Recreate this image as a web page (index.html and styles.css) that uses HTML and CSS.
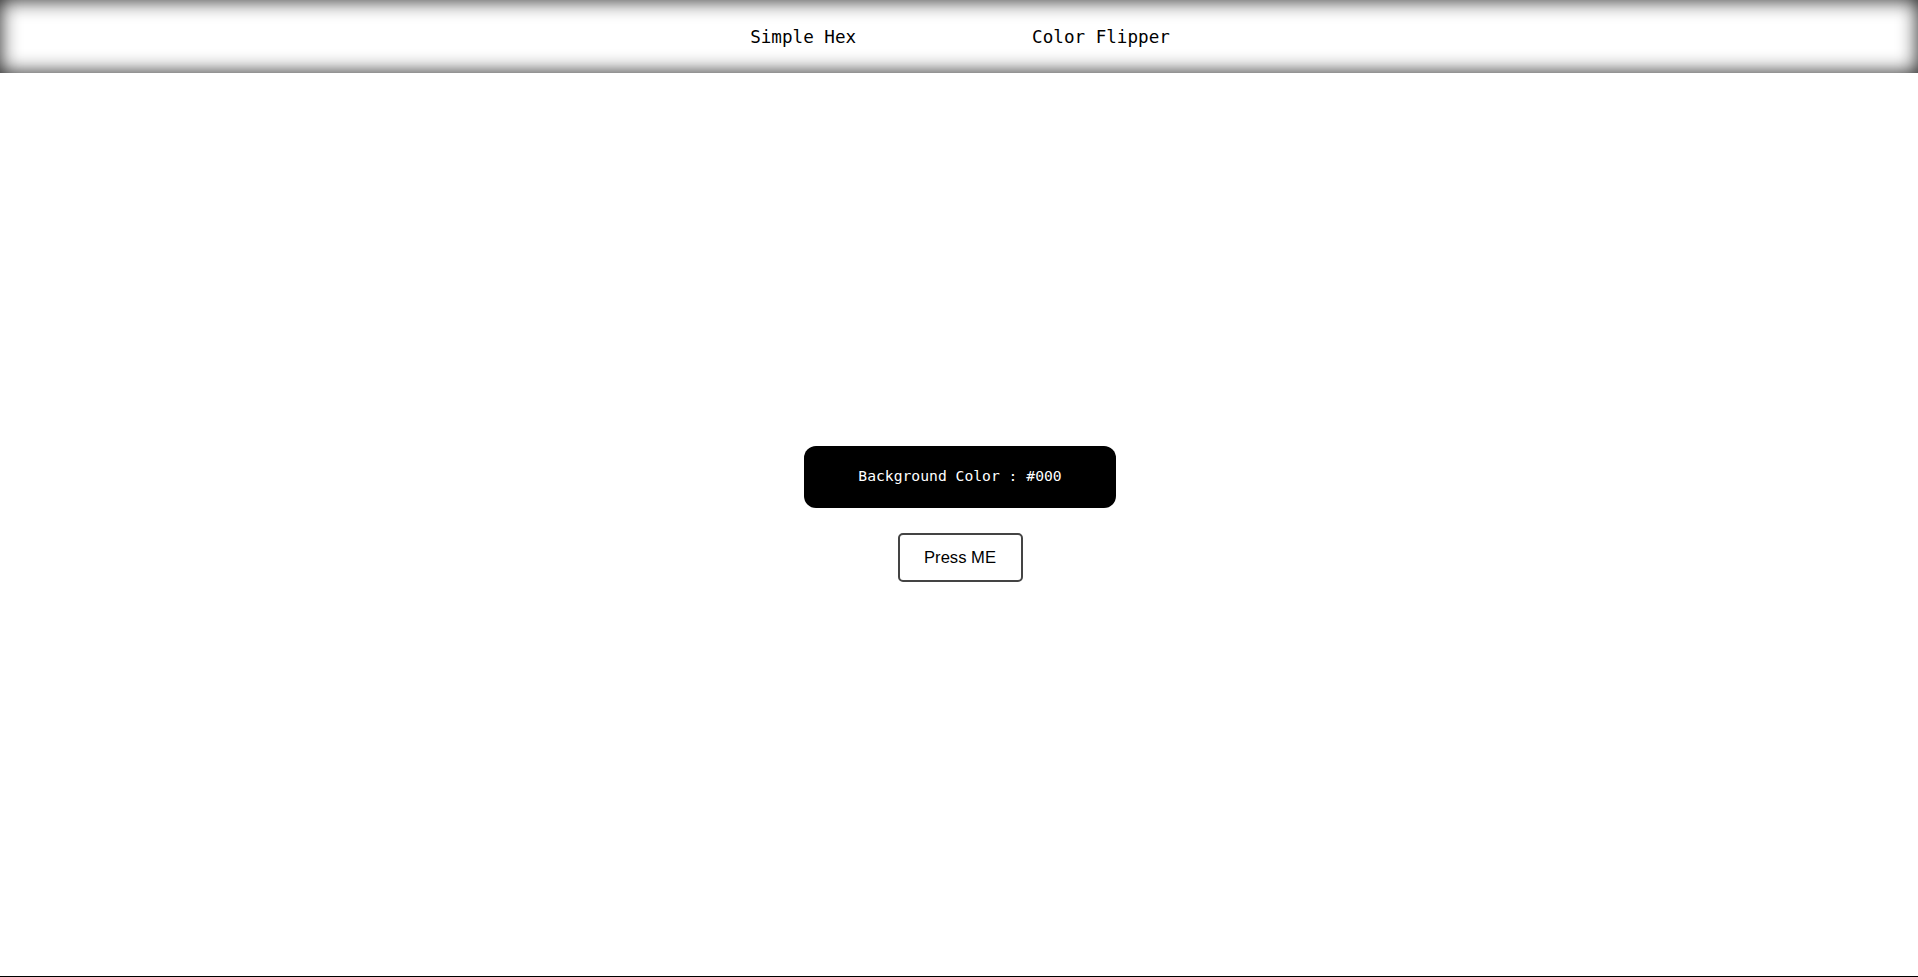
FILE: index.html
```html
<!DOCTYPE html>
<html lang="en">
<head>
<meta charset="utf-8">
<title>Color Flipper</title>
<link rel="stylesheet" href="styles.css">
</head>
<body>
<div class="page">
  <nav class="nav">
    <a class="nav-link" href="#">Simple Hex</a>
    <a class="nav-link" href="#">Color Flipper</a>
  </nav>
  <main class="main">
    <div class="color-box">Background Color : #000</div>
    <button class="press-btn" type="button">Press ME</button>
  </main>
</div>
</body>
</html>
```
FILE: styles.css
```css
* { box-sizing: border-box; }
html, body { margin: 0; padding: 0; background: #fff; }
.page {
  height: 977px;
  display: flex;
  flex-direction: column;
  border-bottom: 1px solid #000;
}
.nav {
  height: 73px;
  flex: 0 0 73px;
  display: flex;
  justify-content: center;
  align-items: center;
  gap: 176px;
  box-shadow: inset 0 0 20px rgba(0, 0, 0, 0.9);
  padding-left: 2px;
}
.nav-link {
  font-family: "DejaVu Sans Mono", "Liberation Mono", monospace;
  font-size: 17.6px;
  color: #000;
  text-decoration: none;
}
.main {
  flex: 1;
  display: flex;
  flex-direction: column;
  align-items: center;
  justify-content: center;
  gap: 25px;
  padding-bottom: 21px;
  padding-left: 2px;
}
.color-box {
  width: 312px;
  height: 62px;
  background: #000;
  color: #fff;
  border-radius: 12px;
  display: flex;
  align-items: center;
  justify-content: center;
  font-family: "DejaVu Sans Mono", "Liberation Mono", monospace;
  font-size: 14.7px;
  padding-bottom: 3px;
}
.press-btn {
  width: 125px;
  height: 49px;
  background: #fff;
  border: 2px solid #444;
  border-radius: 5px;
  font-family: "Liberation Sans", Arial, sans-serif;
  font-size: 16.6px;
  color: #000;
  padding: 0;
}
```
